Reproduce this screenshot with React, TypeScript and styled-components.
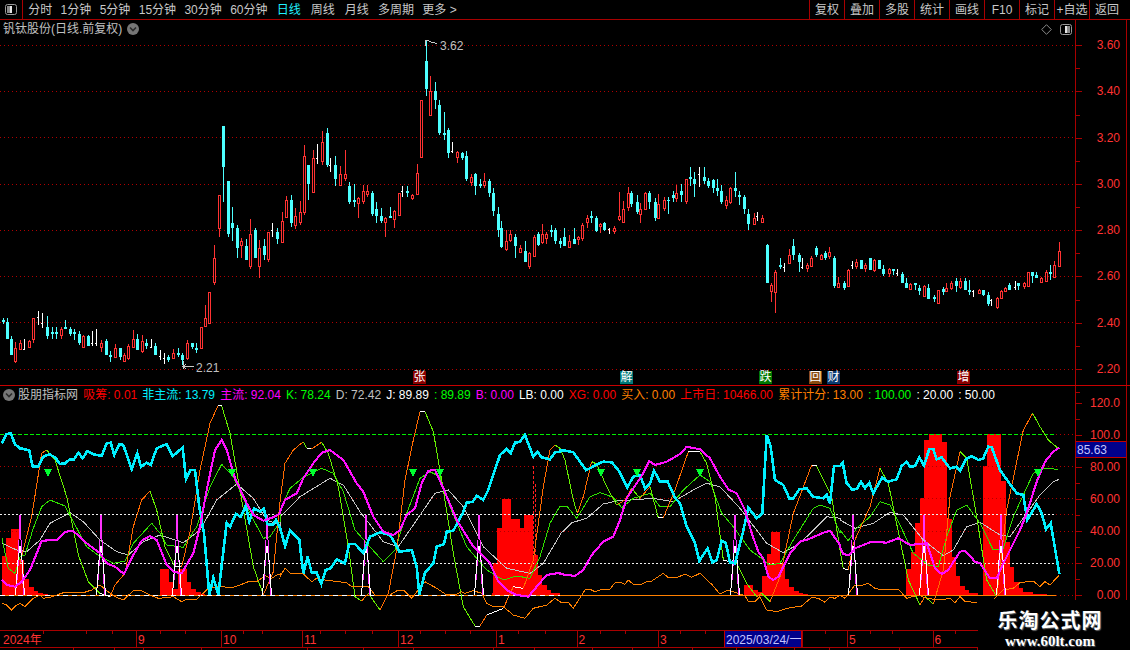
import React from "react";
import styled, { createGlobalStyle } from "styled-components";

const GlobalStyle = createGlobalStyle`
  html, body { margin: 0; padding: 0; background: #000; overflow: hidden; }
  #root { width: 1130px; height: 650px; }
`;

const RED = "#a80000";
const LABEL = "#ff3232";
const FONT = `"Liberation Sans", "Noto Sans CJK SC", sans-serif`;

const Page = styled.div`
  position: relative; width: 1130px; height: 650px; background: #000; overflow: hidden;
  font: 12px/14px ${FONT}; color: #c8c8c8; display: flex; flex-direction: column;
`;
const Toolbar = styled.div`
  height: 19px; flex: none; display: flex; align-items: stretch; border-bottom: 1px solid ${RED}; box-sizing: content-box;
`;
const IconCell = styled.div`
  width: 22px; flex: none; border-right: 1px solid ${RED}; display: flex; align-items: center; justify-content: center;
`;
const Nav = styled.div`display: flex; align-items: center; padding-left: 1px;`;
const NavItem = styled.span<{ $active?: boolean; $wide?: boolean }>`
  padding: 0 ${(p) => (p.$wide ? "5px" : "4.2px")};
  color: ${(p) => (p.$active ? "#20f0ff" : "#c8c8c8")};
  white-space: pre;
`;
const Actions = styled.div`display: flex; margin-left: auto; padding-right: 6px;`;
const ActionCell = styled.div`
  width: 35px; display: flex; align-items: center; justify-content: center; border-left: 1px solid ${RED}; box-sizing: border-box; white-space: pre;
`;

const Row = styled.div<{ $h: number; $line?: boolean }>`
  height: ${(p) => p.$h}px; flex: none; display: flex;
  border-bottom: ${(p) => (p.$line ? `1px solid #c80000` : "none")};
`;
const Main = styled.div`
  width: 1075px; flex: none; position: relative; display: flex; flex-direction: column; overflow: hidden;
`;
const TitleRow = styled.div`
  height: 18px; flex: none; display: flex; align-items: center; padding: 0 3px; color: #c0c0c0; white-space: pre; gap: 5px;
`;
const TitleTools = styled.div`margin-left: auto; display: flex; align-items: center; gap: 8px; padding-right: 0;`;
const Legend = styled.div`
  height: 18px; flex: none; display: flex; align-items: center; padding: 0 3px; gap: 5.1px; white-space: pre;
`;
const LegendName = styled.span`margin: 0 0 0 -2px; color: #c0c0c0;`;
const LegendItem = styled.span<{ $color: string }>`color: ${(p) => p.$color};`;
const ChartSvg = styled.svg`display: block; flex: 1; width: 1075px;`;
const Axis = styled.div<{ $pad: number }>`
  position: relative; width: 52px; flex: none; box-sizing: border-box; border-left: 1px solid ${RED}; border-right: 1px solid ${RED};
  padding-top: ${(p) => p.$pad}px;
`;
const AxisLabel = styled.div<{ $h: number }>`
  position: relative; height: ${(p) => p.$h}px; display: flex; align-items: center; justify-content: flex-end; padding-right: 6px;
  color: ${LABEL};
  &::before { content: ""; position: absolute; left: 0; top: 50%; width: 6px; height: 1px; background: ${RED}; }
  &::after { content: ""; position: absolute; left: 0; top: 100%; width: 4px; height: 1px; background: ${RED}; }
`;
const ValueTag = styled.div`
  position: absolute; left: 0; right: 0; top: 55px; height: 15px; background: #00008b; color: #c4c4ff;
  border-top: 1px solid #c00000; border-bottom: 1px solid #c00000; padding-left: 1px; display: flex; align-items: center; box-sizing: content-box;
`;
const Badge = styled.div<{ $left: number; $bg: string }>`
  position: absolute; left: ${(p) => p.$left}px; top: 351px; width: 13px; height: 13px; background: ${(p) => p.$bg};
  color: #fff; font-size: 12px; line-height: 13px; text-align: center;
`;
const TimeAxis = styled.div`
  position: relative; height: 16px; flex: none; width: 978px; display: flex; border-top: 1px solid ${RED}; border-bottom: 1px solid ${RED}; color: ${LABEL};
`;
const TimeCell = styled.div<{ $w: number; $sel?: boolean }>`
  width: ${(p) => p.$w}px; flex: none; box-sizing: border-box; padding: 2px 0 0 1px; white-space: pre; line-height: 14px;
  border-left: 1px solid ${(p) => (p.$sel ? "#c00000" : RED)};
  ${(p) => p.$sel && "background: #00008b; color: #c4c4ff; border-right: 1px solid #c00000;"}
  &:first-child { border-left: none; padding-left: 3px; }
`;
const TickLayer = styled.svg`position: absolute; left: 0; top: 0; pointer-events: none;`;
const Tabs = styled.div`height: 3px; flex: none; width: 978px; display: flex;`;
const TabCell = styled.div<{ $w: number }>`width: ${(p) => p.$w}px; flex: none; box-sizing: border-box; border-right: 1px solid ${RED};`;
const Watermark = styled.div`
  position: absolute; left: 978px; top: 600px; width: 152px; height: 50px; background: #000; display: flex; flex-direction: column; align-items: center; padding: 9px 8px 0 0; box-sizing: border-box; color: #fff;
`;
const MarkTitle = styled.div`
  font: 700 20px/22px "Noto Sans CJK SC", sans-serif; letter-spacing: 1px; text-shadow: 1px 1px 1px #666;
`;
const MarkUrl = styled.div`
  font: 700 15px/18px "Liberation Serif", serif; text-shadow: 1px 1px 1px #555; margin-top: 1px;
`;
const ChartText = styled.text`
  font: 12px ${FONT}; fill: #c0c0c0; shape-rendering: auto;
`;

type Pt = [number, number];
const seg = (ox: number, s: string): Pt[] =>
  s.trim().split(/\s+/).map((p) => {
    const [x, y] = p.split(",").map(Number);
    return [ox + x / 3, 400 + y / 3] as Pt;
  });
const pts = (a: Pt[]) => a.map((p) => `${p[0].toFixed(1)},${p[1].toFixed(1)}`).join(" ");

const cyan = [
  ...seg(0, "5,130 20,102 32,100 45,133 60,145 75,148 88,152 98,200 115,200 130,170 148,163 165,172 180,192 195,190 210,178 222,178 235,158 248,175 262,153 278,162 305,168 320,130 332,128 343,165 358,132 370,135 395,207 412,160 423,200 440,188 452,195 470,145 500,132 518,168 548,143 558,238 572,210 585,210 598,320 612,400 628,584 640,533 655,584 680,368 690,380 708,342 722,350 737,318 748,365 762,325 780,335 792,326 802,372 818,375 828,360 840,385"),
  ...seg(280, "0,382 15,438 30,392 58,420 70,520 83,470 95,518 110,518 124,552 137,510 152,505 170,478 195,490 207,432 225,432 250,458 258,440 270,410 300,397 330,405 350,438 358,455 395,450 410,500 418,584 435,518 460,490 470,440 492,432 500,395 520,392 548,340 560,308 578,305 590,287 610,300 625,270 660,165 680,147 692,160 705,128 720,125 735,105 760,170 772,155 785,172 810,178 825,157 840,155"),
  ...seg(560, "0,150 15,152 40,157 78,210 90,205 112,193 130,185 155,187 175,210 202,262 220,230 240,225 255,265 270,250 282,212 300,245 323,245 345,293 360,310 380,380 405,430 418,483 443,445 457,487 470,480 485,422 497,428 510,487 525,490 548,400 565,323 590,355 607,340 620,105 632,140 645,240 670,255 688,295 700,295 718,268 740,265 758,290 790,295 800,285 810,310 822,198 840,198"),
  ...seg(840, "0,198 8,188 20,250 38,270 52,265 63,245 75,265 88,248 100,280 127,232 143,245 170,238 185,198 200,185 210,200 225,198 238,172 252,197 268,147 280,147 290,178 305,172 330,205 350,200 360,212 378,178 395,168 415,180 430,175 445,140 455,142 480,210 505,245 530,280 550,285 562,360 590,312 605,340 618,388 632,370 640,415 658,522"),
];
const magenta = [
  ...seg(0, "5,540 20,555 45,560 65,545 90,510 125,422 170,420 195,395 220,393 260,430 300,460 320,490 345,500 372,522 400,465 425,422 450,408 470,420 500,495 520,515 545,520 580,460 600,380 620,270 645,150 665,120 680,150 705,235 740,310 760,345 790,362 820,352 840,340"),
  ...seg(280, "0,335 15,300 50,280 70,235 100,190 125,158 150,150 190,180 230,250 250,275 280,350 310,395 340,405 360,390 380,345 405,325 425,250 445,212 465,210 490,265 530,360 580,440 630,490 655,545 680,570 710,585 745,590 770,560 800,525 840,518"),
  ...seg(560, "0,522 45,528 70,510 95,465 130,425 160,410 180,360 200,295 250,220 268,183 285,195 320,185 360,162 380,140 420,148 450,175 480,230 505,268 530,280 555,330 575,400 595,455 610,475 625,530 640,540 655,530 690,460 720,425 745,418 790,398 810,392 840,435"),
  ...seg(840, "0,440 10,463 28,465 45,445 95,425 140,428 175,415 210,435 260,430 285,505 305,522 325,510 360,455 375,452 405,485 420,490 450,535 470,535 490,490 510,450 540,390 560,340 590,245 615,185 640,155 658,143"),
];
const green = [
  ...seg(0, "6,415 25,505 45,520 60,470 75,465 100,385 125,320 150,300 195,318 220,365 260,440 300,470 340,490 375,483 400,430 455,370 480,400 500,435 550,442 590,380 630,260 665,193 700,230 750,340 790,415 810,410 840,365"),
  ...seg(280, "0,330 30,265 70,232 125,205 160,220 190,275 225,390 265,435 310,485 345,450 380,340 420,235 450,215 480,230 510,320 560,440 620,510 670,540 710,528 750,535 780,470 810,370 840,318"),
  ...seg(560, "0,318 20,318 50,355 90,290 120,278 160,292 185,323 220,295 270,280 300,320 330,320 370,270 420,225 450,245 485,340 520,380 570,450 630,495 660,490 700,420 760,325 780,315 810,325 840,400"),
  ...seg(840, "0,390 25,422 50,385 90,350 120,305 150,315 180,375 220,460 265,495 295,500 320,410 350,330 380,315 420,370 460,450 490,445 520,350 580,220 610,205 655,208"),
];
const grey = [
  ...seg(0, "6,430 50,450 80,455 120,420 150,370 210,338 250,365 300,420 350,455 385,465 430,425 480,405 550,428 600,390 650,300 710,252 760,295 800,360 840,375"),
  ...seg(280, "0,352 60,290 150,235 190,255 240,335 310,425 355,440 410,360 465,280 505,270 550,320 610,440 680,505 750,520 790,490 840,405"),
  ...seg(560, "0,403 35,368 80,355 130,312 170,303 280,295 340,305 400,270 440,250 480,260 540,325 620,430 670,458 720,430 800,350 840,355"),
  ...seg(840, "0,360 45,385 100,370 150,337 190,345 250,420 310,467 340,450 380,380 420,367 480,405 510,410 560,340 600,285 640,245 658,238"),
];
const fast = [
  ...seg(0, "60,490 95,350 125,160 140,150 165,180 200,290 235,465 265,545 300,580 330,590 345,555 375,520 400,380 425,300 450,273 470,330 495,440 525,500 545,500 570,395 600,210 630,70 655,15 665,18 690,100 720,270 760,500 790,585 820,515 840,305"),
  ...seg(280, "15,190 40,150 70,125 80,145 95,147 125,127 145,160 175,260 205,440 225,590 245,603 265,580 300,630 325,580 350,450 375,240 400,120 420,35 435,35 460,95 490,270 520,460 550,620 585,678 600,678 620,645 670,625 700,560 730,565 760,480 790,260 810,150 825,135 840,145"),
  ...seg(560, "15,180 40,300 52,340 70,290 95,185 110,192 140,260 170,315 195,300 215,265 240,295 270,260 295,353 310,353 345,270 385,155 420,155 440,190 465,290 490,480 530,490 560,550 590,590 605,580 630,605 660,530 700,340 755,195 770,198 800,260 815,290 840,450"),
  ...seg(840, "10,505 25,510 40,430 65,375 90,320 120,205 145,250 180,420 205,540 240,615 255,590 280,612 310,510 330,290 360,155 380,175 410,350 440,540 470,590 500,330 550,90 578,40 600,80 625,120 658,148"),
];
const lowA = [
  ...seg(0, "6,610 20,615 35,630 50,615 60,610 75,620 100,595 120,585 130,595 150,592 190,578 250,578 275,570 300,555 320,572 345,590 370,600 400,572 425,572 450,585 475,595 495,593 520,590 545,605 560,597 590,598 625,565 650,560 700,562 720,555 745,545 770,545 795,527 815,535 830,525 840,522"),
  ...seg(280, "0,530 15,505 30,520 70,522 95,545 110,535 135,540 200,548 215,560 240,558 265,560 285,585 330,585 355,570 370,570 395,595 435,545 470,565 500,585 530,582 545,575 555,580 580,572 605,580 620,610 640,620 670,620 700,645 735,655 760,625 800,615 825,595 840,605"),
  ...seg(560, "0,607 25,607 40,625 75,570 90,568 105,575 120,570 150,568 165,548 185,548 195,553 205,540 220,553 240,555 260,545 275,543 310,520 325,533 350,533 375,522 395,532 420,520 455,553 480,582 505,570 520,575 555,587 565,605 585,605 600,590 620,630 650,635 680,625 725,618 755,592 775,595 795,607 810,592 825,595 840,585"),
  ...seg(840, "0,585 15,595 45,555 70,555 85,550 105,565 125,570 145,568 175,568 200,595 235,585 260,595 300,600 330,595 345,608 360,590 375,605 410,607"),
];
const lowB = seg(840, "462,598 490,570 520,565 540,548 580,543 600,560 615,545 630,555 658,525");

const bars: [number, number, number, number][] = [
  [0,5,19,468],[0,19,33,415],[0,33,58,388],[0,58,73,480],[0,73,87,537],[0,87,101,560],[0,101,115,572],[0,115,130,580],[0,130,143,583],
  [0,480,507,507],[0,507,520,545],[0,520,533,567],[0,533,560,507],[0,560,574,545],[0,574,588,567],[0,588,602,577],[0,602,615,583],
  [280,636,640,578],[280,640,652,488],[280,652,665,384],[280,665,693,297],[280,693,720,357],[280,720,733,385],[280,733,760,345],[280,760,773,465],[280,773,786,525],[280,786,800,555],[280,800,813,570],[280,813,840,578],
  [560,552,580,555],[560,580,594,570],[560,594,607,577],[560,607,621,528],[560,621,634,462],[560,634,661,396],[560,661,675,490],[560,675,688,537],[560,688,702,560],[560,702,716,574],[560,716,730,578],[560,730,745,582],
  [840,197,212,508],[840,212,225,455],[840,225,239,368],[840,239,252,295],[840,252,266,120],[840,266,305,103],[840,305,322,125],[840,322,335,358],[840,335,349,470],[840,349,361,528],[840,361,375,558],[840,375,388,570],[840,388,415,580],
  [840,428,442,198],[840,442,483,103],[840,483,497,243],[840,497,510,425],[840,510,523,500],[840,523,537,545],[840,537,550,565],[840,550,578,575],[840,578,620,582],
];
const spikes = [20, 101, 177, 267, 366, 479, 735, 853, 924, 1001];
const triangles = [48, 232, 313, 413, 440, 601, 637, 700, 1038];

type C = [number, number, number, number, number, string];
const candlesA: C[] = [
[8,865,870,876,882,"c"],[20,865,876,926,926,"c"],[34,918,927,974,974,"c"],[46,936,955,992,1000,"r"],[61,930,940,956,958,"r"],[73,928,956,958,960,"w"],[88,930,934,950,952,"r"],[100,865,865,928,938,"r"],[115,843,860,862,885,"w"],[127,850,878,880,895,"w"],[142,858,891,917,926,"c"],[155,892,906,911,926,"c"],[169,892,906,911,926,"c"],[182,892,898,915,926,"r"],[196,870,891,896,898,"c"],[209,892,897,913,917,"c"],[223,898,906,911,930,"c"],[236,903,911,938,946,"c"],[250,915,918,950,952,"r"],[263,915,918,947,948,"c"],[276,903,938,940,948,"w"],[289,897,940,942,948,"w"],[304,930,940,950,966,"r"],[317,928,933,974,976,"c"],[331,962,975,980,995,"c"],[344,942,955,982,984,"r"],[359,954,954,980,990,"c"],[371,970,976,992,994,"r"],[385,942,948,985,990,"r"],[398,900,928,950,955,"r"],[412,912,927,960,960,"c"],[425,915,934,962,968,"r"],[439,926,939,948,956,"c"],[452,926,950,952,955,"w"],[466,938,948,975,975,"c"],[479,960,978,980,990,"w"],[493,968,985,987,1002,"w"],[505,975,981,990,995,"c"],[520,958,970,985,988,"r"],[533,955,969,975,982,"c"],[547,970,974,990,1005,"c"],[560,930,938,985,990,"r"],[575,938,939,952,958,"c"],[587,940,954,960,968,"c"],[602,892,892,955,957,"r"],[614,825,865,887,887,"r"],[628,787,787,878,880,"r"],[641,645,685,755,765,"r"],[656,496,496,595,620,"r"],[668,288,288,410,515,"c"],[683,453,453,612,620,"c"],[695,530,580,594,632,"c"],[710,585,594,654,684,"c"],[722,625,634,645,684,"r"],[737,628,648,690,690,"c"],[749,567,613,707,718,"r"],[764,595,600,684,684,"c"],[776,630,655,707,743,"r"],[791,628,648,675,690,"c"],[803,605,606,687,695,"r"],[817,578,600,602,620,"w"],[830,595,606,627,641,"c"],[845,545,574,635,636,"r"],[858,498,511,560,562,"r"],[872,495,510,580,592,"c"],[884,535,558,586,598,"r"],[899,513,545,576,584,"r"],[911,345,379,545,555,"r"],[925,405,405,462,510,"c"],[938,360,385,485,486,"r"],[952,342,384,386,402,"w"],[965,303,337,392,405,"r"],[980,294,309,405,412,"c"],[991,385,405,407,425,"w"],[1006,378,405,447,467,"c"],[1019,408,433,465,467,"r"],[1034,360,433,443,452,"r"],[1046,455,468,517,522,"c"],[1061,462,511,516,530,"c"],[1073,502,503,518,564,"r"],[1088,465,484,513,522,"r"],[1100,465,484,492,500,"r"],[1115,484,489,552,558,"c"],[1127,517,538,557,578,"c"],[1142,535,558,572,580,"c"],[1154,562,565,575,620,"r"],[1169,532,558,563,565,"c"],[1181,540,544,566,594,"r"],[1196,488,490,555,558,"r"],[1207,468,484,486,500,"w"],[1222,468,483,488,500,"c"],[1235,492,496,504,510,"r"],[1250,403,428,492,495,"r"],[1262,210,210,382,384,"r"],[1277,30,94,178,198,"c"],[1289,138,184,256,258,"r"],[1304,156,183,210,237,"c"],[1316,210,225,310,315,"c"],[1331,246,309,315,330,"c"],[1343,295,300,368,384,"c"],[1356,336,364,366,370,"w"],[1370,362,365,380,398,"r"],[1385,365,370,385,390,"c"],[1397,364,378,447,453,"c"],[1412,432,441,457,468,"r"],[1424,428,432,467,495,"c"],[1439,448,462,468,473,"c"],[1451,430,454,465,475,"r"],[1466,447,453,488,500,"c"],[1478,475,490,543,558,"c"],[1493,530,552,600,620,"c"],
];
const candlesB: C[] = [
[3,272,294,352,355,"c"],[15,300,333,358,362,"r"],[26,300,311,330,335,"r"],[38,312,321,347,384,"c"],[49,345,354,367,370,"r"],[61,333,363,395,396,"c"],[72,367,370,407,416,"r"],[84,316,321,377,378,"r"],[94,306,311,345,348,"c"],[104,282,312,335,342,"r"],[115,305,312,325,342,"r"],[126,285,300,307,320,"c"],[138,295,300,333,342,"c"],[149,325,334,342,353,"c"],[160,295,321,348,348,"c"],[171,315,333,352,354,"r"],[183,295,327,341,342,"c"],[193,318,322,328,346,"r"],[205,280,285,324,334,"r"],[216,255,265,275,294,"r"],[227,243,258,264,278,"c"],[238,258,264,302,305,"c"],[250,278,281,287,310,"r"],[260,275,279,300,302,"c"],[271,294,296,298,312,"w"],[283,288,294,302,312,"r"],[295,186,258,268,272,"r"],[305,213,238,276,278,"r"],[318,171,190,232,242,"r"],[327,183,189,221,232,"c"],[340,195,217,245,252,"c"],[349,220,238,252,279,"r"],[362,185,190,238,241,"r"],[372,183,189,215,238,"c"],[385,205,216,263,273,"c"],[394,192,222,265,267,"r"],[407,200,210,233,242,"r"],[417,200,210,214,252,"c"],[430,183,195,204,216,"c"],[439,165,190,204,216,"r"],[451,163,184,194,215,"c"],[462,148,148,213,222,"r"],[474,112,141,147,168,"c"],[484,127,148,162,201,"c"],[495,112,132,134,170,"w"],[507,112,142,152,162,"c"],[518,143,153,168,175,"c"],[529,148,150,175,188,"c"],[541,148,175,183,198,"c"],[551,164,184,217,222,"c"],[563,198,211,224,236,"r"],[573,172,174,215,222,"r"],[586,126,175,183,200,"c"],[596,184,195,200,224,"c"],[608,196,201,236,252,"c"],[618,238,252,283,300,"c"],[631,250,264,282,286,"r"],[640,245,258,260,272,"w"],[653,256,264,276,280,"r"],
[664,343,345,458,458,"c"],[675,458,466,483,516,"r"],[685,421,426,487,548,"r"],[698,384,405,411,416,"c"],[707,398,410,412,425,"w"],[720,358,376,399,399,"r"],[730,327,349,375,390,"c"],[743,368,376,395,426,"c"],[752,385,412,414,418,"w"],[765,400,405,413,425,"r"],[775,379,384,408,410,"r"],[787,348,353,375,380,"c"],[798,372,376,388,388,"r"],[810,363,369,385,390,"c"],[820,352,365,377,388,"r"],[832,378,384,467,473,"c"],[842,440,460,470,473,"r"],[855,452,460,473,480,"c"],[865,418,419,467,467,"r"],[877,392,404,406,418,"w"],[887,388,396,409,418,"r"],[899,390,390,416,417,"c"],[909,398,404,415,426,"r"],[922,384,384,420,420,"c"],[931,388,391,421,426,"r"],[944,390,390,418,418,"c"],[954,405,418,432,438,"c"],[967,414,418,428,442,"r"],[977,417,418,424,436,"c"],[988,418,428,430,438,"w"],[1000,425,432,458,460,"c"],[1011,445,460,473,475,"c"],[1021,458,461,478,480,"r"],[1034,460,460,465,480,"c"],[1044,465,474,484,495,"c"],[1056,465,467,497,498,"r"],[1066,462,474,506,508,"c"],[1079,495,501,507,516,"c"],[1089,479,481,518,518,"r"],[1102,470,478,485,495,"c"],[1111,460,474,483,486,"r"],[1123,452,459,475,480,"r"],[1134,445,453,467,485,"c"],[1146,443,453,470,477,"r"],[1157,443,453,480,480,"c"],[1168,450,481,487,495,"c"],[1178,480,483,485,500,"w"],[1191,478,481,490,492,"r"],[1201,480,481,495,497,"c"],[1214,485,496,523,527,"c"],[1223,508,510,512,527,"w"],[1236,500,503,532,537,"r"],[1246,480,482,503,507,"r"],[1258,470,474,483,485,"r"],[1268,460,466,480,480,"c"],[1281,453,470,472,480,"w"],[1290,460,460,468,480,"c"],[1303,455,460,468,478,"r"],[1313,425,427,467,470,"r"],[1325,425,427,438,458,"c"],[1335,427,435,443,445,"c"],[1347,440,444,455,458,"r"],[1358,420,425,452,455,"r"],[1370,405,427,432,450,"c"],[1380,392,405,440,441,"r"],[1392,336,364,407,408,"r"],
];

const Candle: React.FC<{ y: (v: number) => number; c: C; sx: (v: number) => number }> = ({ c, y, sx }) => {
  const x = Math.round(sx(c[0]));
  const [hi, top, bot, lo] = [y(c[1]), y(c[2]), y(c[3]), y(c[4])];
  if (c[5] === "w")
    return (
      <g stroke="#fff">
        <line x1={x + 0.5} x2={x + 0.5} y1={hi} y2={lo} />
        <line x1={x - 1} x2={x + 1} y1={top + 0.5} y2={top + 0.5} />
      </g>
    );
  if (c[5] === "c")
    return (
      <g>
        <line x1={x + 0.5} x2={x + 0.5} y1={hi} y2={lo} stroke="#4dffff" />
        <rect x={x - 1} y={top} width={3} height={Math.max(1, bot - top)} fill="#4dffff" />
      </g>
    );
  return (
    <g stroke="#ff3232">
      <line x1={x + 0.5} x2={x + 0.5} y1={hi} y2={top} />
      <line x1={x + 0.5} x2={x + 0.5} y1={bot} y2={lo} />
      <rect x={x - 0.5} y={top + 0.5} width={2} height={Math.max(1, bot - top)} fill="#000" />
    </g>
  );
};

const Patterns: React.FC<{ id: string }> = ({ id }) => (
  <defs>
    <pattern id={`${id}-red`} width="4" height="1" patternUnits="userSpaceOnUse">
      <rect width="1" height="1" fill="#b00000" />
    </pattern>
    <pattern id={`${id}-white`} width="4" height="1" patternUnits="userSpaceOnUse">
      <rect width="2" height="1" fill="#f0f0f0" />
    </pattern>
    <pattern id={`${id}-green`} width="6" height="1" patternUnits="userSpaceOnUse">
      <rect width="4" height="1" fill="#00f000" />
    </pattern>
    <pattern id={`${id}-base`} width="9" height="1" patternUnits="userSpaceOnUse">
      <rect width="5" height="1" fill="#ffffff" />
    </pattern>
  </defs>
);

const priceGrid = [45, 91, 137, 184, 230, 276, 322, 369];

const PriceChart = () => (
  <ChartSvg viewBox="0 38 1075 347" height={347} shapeRendering="crispEdges">
    <Patterns id="p" />
    {priceGrid.map((g) => (
      <rect key={g} x={0} y={g} width={1075} height={1} fill="url(#p-red)" />
    ))}
    {candlesA.map((c, i) => (
      <Candle key={i} c={c} sx={(v) => v / 3} y={(v) => Math.round(30 + v / 3)} />
    ))}
    {candlesB.map((c, i) => (
      <Candle key={i} c={c} sx={(v) => 500 + v / 2.489} y={(v) => Math.round(130 + v / 3)} />
    ))}
    <polyline points="425.5,46 425.5,41 428,40.5 431,42 434,42.5 437,44" fill="none" stroke="#c8c8c8" />
    <line x1={183.5} x2={183.5} y1={361} y2={369} stroke="#c8c8c8" />
    <line x1={183} x2={194} y1={366.5} y2={366.5} stroke="#c8c8c8" />
    <polyline points="186,364 183,366.5 186,369" fill="none" stroke="#c8c8c8" />
    <ChartText x={440} y={50}>3.62</ChartText>
    <ChartText x={196} y={372}>2.21</ChartText>
  </ChartSvg>
);

const Spike: React.FC<{ x: number }> = ({ x }) => (
  <g fill="none">
    <polyline points={`${x - 2.5},580 ${x - 1},540 ${x},515 ${x + 1},540 ${x + 3.5},595`} stroke="#ff33ff" />
    <polyline points={`${x - 4.5},595 ${x - 2},560 ${x},546 ${x + 2},560 ${x + 4.5},595`} stroke="#fff" />
  </g>
);

const FastLine = () => (
  <g fill="none">
    {fast.map((p, i) => {
      if (i === 0 || Math.abs(p[0] - fast[i - 1][0]) > 30) return null;
      const q = fast[i - 1];
      const dx = p[0] - q[0];
      const dy = p[1] - q[1];
      const color = Math.abs(dy) / Math.max(dx, 0.1) < 0.45 ? "#ffffff" : dy < 0 ? "#ff6a00" : "#66f000";
      return <line key={i} x1={q[0]} y1={q[1]} x2={p[0]} y2={p[1]} stroke={color} />;
    })}
  </g>
);

const IndicatorChart = () => (
  <ChartSvg viewBox="0 404 1075 226" height={226} shapeRendering="crispEdges">
    <Patterns id="i" />
    {bars.map((b, i) => (
      <rect key={i} x={Math.round(b[0] + b[1] / 3)} width={Math.round(b[0] + b[2] / 3) - Math.round(b[0] + b[1] / 3)} y={Math.round(400 + b[3] / 3)} height={595 - Math.round(400 + b[3] / 3)} fill="#ff0000" />
    ))}
    <line x1={533.5} x2={533.5} y1={466} y2={560} stroke="#ff2020" strokeDasharray="3 2" />
    <line x1={535.5} x2={535.5} y1={484} y2={560} stroke="#ff2020" strokeDasharray="3 2" />
    {[466, 498, 531].map((g) => (
      <rect key={g} x={0} y={g} width={1075} height={1} fill="url(#i-red)" />
    ))}
    {[434, 514, 563, 595].map((g) => (
      <rect key={g} x={1056} y={g} width={19} height={1} fill="url(#i-red)" />
    ))}
    <rect x={0} y={434} width={1056} height={1} fill="url(#i-green)" />
    <rect x={0} y={514} width={1056} height={1} fill="url(#i-white)" />
    <rect x={0} y={563} width={1056} height={1} fill="url(#i-white)" />
    <rect x={0} y={595} width={1056} height={1} fill="#ff8000" />
    <rect x={0} y={595} width={560} height={1} fill="url(#i-base)" />
    <polyline points={pts(grey)} fill="none" stroke="#c4c4c4" />
    <polyline points={pts(green)} fill="none" stroke="#30e000" />
    <FastLine />
    <polyline points={pts(lowA)} fill="none" stroke="#ff8000" />
    <polyline points={pts(lowB)} fill="none" stroke="#ff8000" />
    {spikes.map((x) => <Spike key={x} x={x} />)}
    <polyline points={pts(cyan)} fill="none" stroke="#00f0ff" strokeWidth={2.6} />
    <polyline points={pts(magenta)} fill="none" stroke="#ff10ff" strokeWidth={2.1} />
    {triangles.map((x) => (
      <polygon key={x} points={`${x - 4},469 ${x + 4},469 ${x},477`} fill="#00ff30" />
    ))}
  </ChartSvg>
);

const Chevron = () => (
  <svg width="12" height="12" viewBox="0 0 12 12">
    <circle cx="6" cy="6" r="6" fill="#767676" />
    <path d="M3 4.5 L6 7.5 L9 4.5" fill="none" stroke="#2a2a2a" strokeWidth="1.6" />
  </svg>
);
const PanelIcon: React.FC<{ flip?: boolean }> = ({ flip }) => (
  <svg width="12" height="11" viewBox="0 0 12 11" style={flip ? { transform: "scaleX(-1)" } : undefined}>
    <rect x="0.5" y="0.5" width="11" height="10" rx="2" fill="#000" stroke="#9a9a9a" />
    <rect x="7" y="2" width="3" height="7" fill="#8a8a8a" />
    <rect x="5" y="2" width="2" height="7" fill="#e4e4e4" />
  </svg>
);
const Diamond = () => (
  <svg width="11" height="11" viewBox="0 0 11 11">
    <path d="M5.5 0.7 L10.3 5.5 L5.5 10.3 L0.7 5.5 Z" fill="none" stroke="#8a8a8a" />
  </svg>
);

const navItems: [string, boolean?, boolean?][] = [
  ["分时"], ["1分钟"], ["5分钟"], ["15分钟"], ["30分钟"], ["60分钟"],
  ["日线", true, true], ["周线", false, true], ["月线", false, true], ["多周期"], ["更多 >"],
];
const actions = ["复权", "叠加", "多股", "统计", "画线", "F10", "标记", "+自选", "返回"];
const priceLabels = ["3.60", "3.40", "3.20", "3.00", "2.80", "2.60", "2.40", "2.20"];
const indLabels = ["120.0", "100.0", "80.00", "60.00", "40.00", "20.00", "0.00"];
const badges: [string, number, string][] = [
  ["张", 413, "#8b0000"], ["解", 620, "#007878"], ["跌", 759, "#007800"], ["回", 809, "#8a4a10"], ["财", 827, "#0a3a70"], ["增", 957, "#8b0000"],
];
const legend: [string, string][] = [
  ["吸筹: 0.01", "#ff0000"], ["非主流: 13.79", "#00f0ff"], ["主流: 92.04", "#ff00ff"], ["K: 78.24", "#00ff00"],
  ["D: 72.42", "#c0c0c0"], ["J: 89.89", "#ffffff"], [": 89.89", "#00ff00"], ["B: 0.00", "#ff00ff"], ["LB: 0.00", "#ffffff"],
  ["XG: 0.00", "#ff0000"], ["买入: 0.00", "#ff8000"], ["上市日: 10466.00", "#ff0000"], ["累计计分: 13.00", "#ff8000"],
  [": 100.00", "#00ff00"], [": 20.00", "#ffffff"], [": 50.00", "#ffffff"],
];
const timeCells: [string, number, boolean?][] = [
  ["2024年", 136], ["9", 85], ["10", 81], ["11", 96], ["12", 98], ["1", 80.5], ["2", 81.5], ["3", 66],
  ["2025/03/24/一", 78, true], ["", 45], ["5", 85.5], ["6", 45.5],
];
const tabs = [74, 41, 29, 58, 106, 56, 50, 80, 41, 58, 40, 60, 44, 58, 35, 70, 78];
const ticks = [43, 86, 112, 160, 185, 243, 262, 320, 345, 372, 420, 445, 470, 518, 545, 600, 625, 680, 705, 825, 870, 892, 955];

export default function App() {
  return (
    <Page>
      <GlobalStyle />
      <Toolbar>
        <IconCell><PanelIcon flip /></IconCell>
        <Nav>
          {navItems.map(([t, a, w]) => (
            <NavItem key={t} $active={a} $wide={w}>{t}</NavItem>
          ))}
        </Nav>
        <Actions>
          {actions.map((a) => <ActionCell key={a}>{a}</ActionCell>)}
        </Actions>
      </Toolbar>
      <Row $h={365} $line>
        <Main>
          <TitleRow>
            <span>钒钛股份(日线.前复权)</span>
            <Chevron />
            <TitleTools>
              <Diamond />
              <PanelIcon />
            </TitleTools>
          </TitleRow>
          <PriceChart />
          {badges.map(([t, l, c]) => <Badge key={t} $left={l} $bg={c}>{t}</Badge>)}
        </Main>
        <Axis $pad={2}>
          {priceLabels.map((l) => <AxisLabel key={l} $h={46.25}>{l}</AxisLabel>)}
        </Axis>
      </Row>
      <Row $h={244}>
        <Main>
          <Legend>
            <Chevron />
            <LegendName>股朋指标网</LegendName>
            {legend.map(([t, c]) => <LegendItem key={t + c} $color={c}>{t}</LegendItem>)}
          </Legend>
          <IndicatorChart />
        </Main>
        <Axis $pad={1}>
          {indLabels.map((l) => <AxisLabel key={l} $h={32}>{l}</AxisLabel>)}
          <ValueTag>85.63</ValueTag>
        </Axis>
      </Row>
      <TimeAxis>
        {timeCells.map(([t, w, s]) => <TimeCell key={t + w} $w={w} $sel={s}>{t}</TimeCell>)}
        <TickLayer width="978" height="4">
          {ticks.map((x) => <line key={x} x1={x + 0.5} x2={x + 0.5} y1={0} y2={3} stroke={RED} />)}
        </TickLayer>
      </TimeAxis>
      <Tabs>
        {tabs.map((w, i) => <TabCell key={i} $w={w} />)}
      </Tabs>
      <Watermark>
        <MarkTitle>乐淘公式网</MarkTitle>
        <MarkUrl>www.60lt.com</MarkUrl>
      </Watermark>
    </Page>
  );
}
